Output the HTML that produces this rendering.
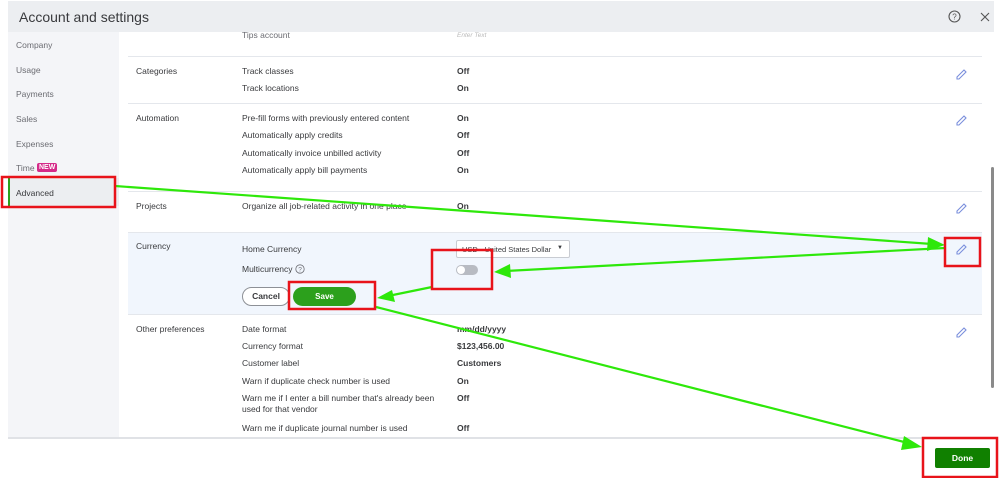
<!DOCTYPE html>
<html><head><style>
*{margin:0;padding:0;box-sizing:border-box}
body{width:999px;height:478px;position:relative;overflow:hidden;background:#fff;font-family:"Liberation Sans",sans-serif;color:#393a3d}
.a{position:absolute;white-space:nowrap}
.s{font-size:8.5px;color:#6b6c72}
.l{font-size:8.5px;color:#393a3d}
.v{font-size:8.5px;font-weight:bold;color:#393a3d}
.sep{position:absolute;left:128px;width:854px;height:1px;background:#e4e7ec}
</style></head><body>
<div class="a" style="left:8px;top:1px;width:986px;height:31px;background:#eceef1"></div>
<div class="a" style="left:19px;top:9px;font-size:14px;color:#393a3d">Account and settings</div>
<svg class="a" style="left:948px;top:10px" width="13" height="13" viewBox="0 0 13 13"><circle cx="6.5" cy="6.5" r="5.5" fill="none" stroke="#555" stroke-width="1.1"/><text x="6.5" y="9.5" font-size="8" text-anchor="middle" fill="#555" font-family="Liberation Sans">?</text></svg>
<svg class="a" style="left:980px;top:12px" width="10" height="10"><path d="M1 1L9 9M9 1L1 9" stroke="#555" stroke-width="1.1"/></svg>
<div class="a" style="left:8px;top:32px;width:111px;height:406px;background:#f4f5f8"></div>
<div class="a s" style="left:16px;top:40px">Company</div>
<div class="a s" style="left:16px;top:65px">Usage</div>
<div class="a s" style="left:16px;top:89px">Payments</div>
<div class="a s" style="left:16px;top:114px">Sales</div>
<div class="a s" style="left:16px;top:139px">Expenses</div>
<div class="a s" style="left:16px;top:163px">Time</div>
<div class="a" style="left:37px;top:163px;background:#d52b8a;color:#fff;font-size:7px;font-weight:bold;padding:1px 2px;border-radius:2px">NEW</div>
<div class="a" style="left:8px;top:178px;width:111px;height:28px;background:#eceef1;border-left:2px solid #2ca01c"></div>
<div class="a l" style="left:16px;top:188px">Advanced</div>

<div class="a s" style="left:242px;top:30px">Tips account</div>
<div class="a" style="left:457px;top:32px;font-size:6.5px;font-style:italic;color:#bbb">Enter Text</div>
<div class="sep" style="top:56px"></div>
<div class="a l" style="left:136px;top:66px">Categories</div>
<div class="a l" style="left:242px;top:66px">Track classes</div><div class="a v" style="left:457px;top:66px">Off</div>
<div class="a l" style="left:242px;top:83px">Track locations</div><div class="a v" style="left:457px;top:83px">On</div>
<div class="sep" style="top:103px"></div>
<div class="a l" style="left:136px;top:113px">Automation</div>
<div class="a l" style="left:242px;top:113px">Pre-fill forms with previously entered content</div><div class="a v" style="left:457px;top:113px">On</div>
<div class="a l" style="left:242px;top:130px">Automatically apply credits</div><div class="a v" style="left:457px;top:130px">Off</div>
<div class="a l" style="left:242px;top:148px">Automatically invoice unbilled activity</div><div class="a v" style="left:457px;top:148px">Off</div>
<div class="a l" style="left:242px;top:165px">Automatically apply bill payments</div><div class="a v" style="left:457px;top:165px">On</div>
<div class="sep" style="top:191px"></div>
<div class="a l" style="left:136px;top:201px">Projects</div>
<div class="a l" style="left:242px;top:201px">Organize all job-related activity in one place</div><div class="a v" style="left:457px;top:201px">On</div>
<div class="sep" style="top:232px"></div>
<div class="a" style="left:128px;top:233px;width:854px;height:81px;background:#f1f6fd"></div>
<div class="a l" style="left:136px;top:241px">Currency</div>
<div class="a l" style="left:242px;top:244px">Home Currency</div>
<div class="a" style="left:456px;top:240px;width:114px;height:18px;background:#fff;border:1px solid #c9ccd2;border-radius:2px"></div>
<div class="a l" style="left:462px;top:245px;font-size:7.5px">USD - United States Dollar</div>
<div class="a" style="left:557px;top:245px;font-size:6px">▼</div>
<div class="a l" style="left:242px;top:264px">Multicurrency</div>
<svg class="a" style="left:295px;top:264px" width="10" height="10"><circle cx="5" cy="5" r="4.2" fill="none" stroke="#6b6c72" stroke-width=".8"/><text x="5" y="7.5" font-size="6.5" text-anchor="middle" fill="#6b6c72" font-family="Liberation Sans">?</text></svg>
<div class="a" style="left:456px;top:265px;width:22px;height:10px;border-radius:5px;background:#b8bbc2"></div>
<div class="a" style="left:457px;top:266px;width:8px;height:8px;border-radius:4px;background:#fff"></div>
<div class="a" style="left:242px;top:287px;width:48px;height:19px;border:1px solid #8d9096;border-radius:10px;background:#fff;font-size:8.5px;font-weight:bold;text-align:center;line-height:17px">Cancel</div>
<div class="a" style="left:293px;top:287px;width:63px;height:19px;border-radius:10px;background:#2ca01c;color:#fff;font-size:8px;font-weight:bold;text-align:center;line-height:19px">Save</div>
<div class="sep" style="top:314px"></div>
<div class="a l" style="left:136px;top:324px">Other preferences</div>
<div class="a l" style="left:242px;top:324px">Date format</div><div class="a v" style="left:457px;top:324px">mm/dd/yyyy</div>
<div class="a l" style="left:242px;top:341px">Currency format</div><div class="a v" style="left:457px;top:341px">$123,456.00</div>
<div class="a l" style="left:242px;top:358px">Customer label</div><div class="a v" style="left:457px;top:358px">Customers</div>
<div class="a l" style="left:242px;top:376px">Warn if duplicate check number is used</div><div class="a v" style="left:457px;top:376px">On</div>
<div class="a l" style="left:242px;top:393px">Warn me if I enter a bill number that's already been</div><div class="a v" style="left:457px;top:393px">Off</div>
<div class="a l" style="left:242px;top:404px">used for that vendor</div>
<div class="a l" style="left:242px;top:423px">Warn me if duplicate journal number is used</div><div class="a v" style="left:457px;top:423px">Off</div>
<div class="a" style="left:8px;top:437px;width:986px;height:2px;background:#e0e2e6"></div>
<div class="a" style="left:991px;top:167px;width:3px;height:221px;background:#8a8a8a;border-radius:2px"></div>

<svg class="a" style="left:0;top:0" width="999" height="478">
<g fill="none" stroke="#7a8fdc" stroke-width="1.1">
<path d="M957 77l7-7 2 2-7 7h-2z"/><path d="M957 123l7-7 2 2-7 7h-2z"/><path d="M957 211l7-7 2 2-7 7h-2z"/><path d="M957 252l7-7 2 2-7 7h-2z"/><path d="M957 335l7-7 2 2-7 7h-2z"/>
</g>
<rect x="935" y="448" width="55" height="20" rx="2" fill="#108000"/>
<text x="962.5" y="461" font-size="8.5" font-weight="bold" fill="#fff" text-anchor="middle" font-family="Liberation Sans">Done</text>
<g stroke="#2ee80a" stroke-width="2.2" fill="none">
<path d="M115 186L932 244"/><path d="M945 248L505 271"/><path d="M432 287L388 296"/><path d="M376 307L908 443"/>
</g>
<g fill="#2ee80a">
<path d="M945 245L928 237L927 251Z"/><path d="M494 272L510 264L511 278Z"/><path d="M377 298L392 290L395 302Z"/><path d="M922 447L904 436L901 450Z"/>
</g>
<g fill="none" stroke="#e8131a" stroke-width="2.5">
<rect x="2" y="177" width="113" height="30"/><rect x="945" y="238" width="35" height="28"/><rect x="432" y="250" width="60" height="39"/><rect x="289" y="282" width="86" height="27"/><rect x="923" y="438" width="74" height="39"/>
</g>
</svg>
</body></html>
